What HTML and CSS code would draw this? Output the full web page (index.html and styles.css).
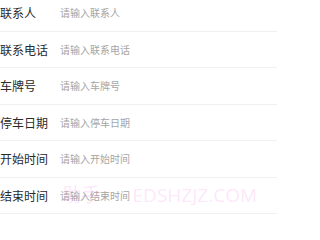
FILE: index.html
```html
<!DOCTYPE html>
<html lang="zh-CN">
<head>
<meta charset="utf-8">
<link rel="stylesheet" href="styles.css">
</head>
<body>
<div class="page">
  <div class="form">
    <div class="row"><span class="label">联系人</span><span class="input">请输入联系人</span></div>
    <div class="row"><span class="label">联系电话</span><span class="input">请输入联系电话</span></div>
    <div class="row"><span class="label">车牌号</span><span class="input">请输入车牌号</span></div>
    <div class="row"><span class="label">停车日期</span><span class="input">请输入停车日期</span></div>
    <div class="row"><span class="label">开始时间</span><span class="input">请输入开始时间</span></div>
    <div class="row"><span class="label">结束时间</span><span class="input">请输入结束时间</span></div>
  </div>
  <div class="watermark">助手 - EDSHZJZ.COM</div>
</div>
</body>
</html>
```
FILE: styles.css
```css
html, body {
  margin: 0;
  padding: 0;
  background: #fff;
}
body {
  font-family: "Noto Sans CJK SC", "Noto Sans", sans-serif;
  width: 277px;
  height: 217px;
  overflow: hidden;
}
.page {
  position: relative;
  height: 217px;
  overflow: hidden;
}
.form {
  display: flex;
  flex-direction: column;
  margin-top: -5px;
}
.row {
  display: flex;
  align-items: center;
  height: 35.5px;
  border-bottom: 1px solid #f0f0f0;
}
.label {
  width: 60px;
  flex: none;
  font-size: 12px;
  color: #2a2a2a;
}
.input {
  font-size: 10px;
  color: #a5a5a5;
}
.watermark {
  position: absolute;
  right: 20px;
  top: 184px;
  font-family: "Open Sans", "Noto Sans CJK SC", sans-serif;
  font-size: 19px;
  line-height: 22px;
  color: rgba(240, 110, 220, 0.18);
  white-space: nowrap;
  word-spacing: 8px;
}
```
